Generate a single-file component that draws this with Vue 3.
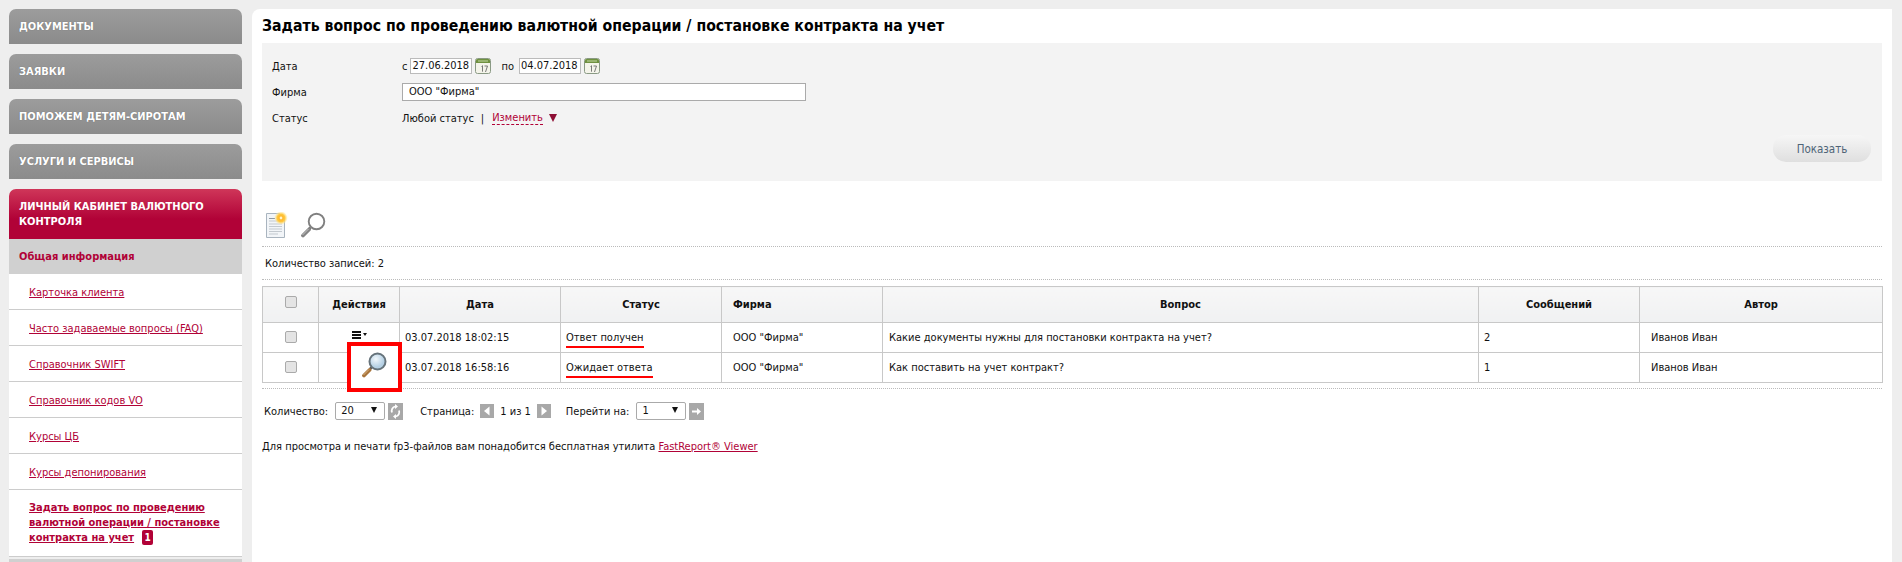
<script setup>
const topMenu = ['ДОКУМЕНТЫ', 'ЗАЯВКИ', 'ПОМОЖЕМ ДЕТЯМ-СИРОТАМ', 'УСЛУГИ И СЕРВИСЫ']
const links = ['Карточка клиента', 'Часто задаваемые вопросы (FAQ)', 'Справочник SWIFT', 'Справочник кодов VO', 'Курсы ЦБ', 'Курсы депонирования']
const rows = [
  { date: '03.07.2018 18:02:15', status: 'Ответ получен', firm: 'ООО "Фирма"', q: 'Какие документы нужны для постановки контракта на учет?', n: 2, author: 'Иванов Иван', menu: true },
  { date: '03.07.2018 16:58:16', status: 'Ожидает ответа', firm: 'ООО "Фирма"', q: 'Как поставить на учет контракт?', n: 1, author: 'Иванов Иван', menu: false }
]
</script>

<template>
  <div class="page">
    <aside class="side">
      <div v-for="m in topMenu" :key="m" class="mi">{{ m }}</div>
      <div class="mi-active">ЛИЧНЫЙ КАБИНЕТ ВАЛЮТНОГО КОНТРОЛЯ</div>
      <div class="sub-head">Общая информация</div>
      <ul class="links">
        <li v-for="l in links" :key="l"><a>{{ l }}</a></li>
        <li class="cur"><a>Задать вопрос по проведению валютной операции / постановке контракта на учет</a><span class="num">1</span></li>
      </ul>
      <div class="side-end"></div>
    </aside>

    <main class="main">
      <h1>Задать вопрос по проведению валютной операции / постановке контракта на учет</h1>

      <section class="filter">
        <div class="f-row">
          <label>Дата</label>
          <span class="pre">с</span><span class="inp date">27.06.2018</span>
          <svg class="cal" viewBox="0 0 16 16"><rect x=".5" y=".5" width="15" height="15" rx="2" fill="#f4f4ea" stroke="#8a9a84"/><path d="M1 5V2.500A1.500 1.500 0 0 1 2.500 1h11A1.500 1.500 0 0 1 15 2.500V5z" fill="#6f9140"/><path d="M3 3h10" stroke="#c4d8a0"/><path d="M6.500 8.500l1-.8v6M9.500 8h3l-2 6" fill="none" stroke="#6b6b6b" stroke-width=".9"/></svg>
          <span class="pre po">по</span><span class="inp date">04.07.2018</span>
          <svg class="cal" viewBox="0 0 16 16"><rect x=".5" y=".5" width="15" height="15" rx="2" fill="#f4f4ea" stroke="#8a9a84"/><path d="M1 5V2.500A1.500 1.500 0 0 1 2.500 1h11A1.500 1.500 0 0 1 15 2.500V5z" fill="#6f9140"/><path d="M3 3h10" stroke="#c4d8a0"/><path d="M6.500 8.500l1-.8v6M9.500 8h3l-2 6" fill="none" stroke="#6b6b6b" stroke-width=".9"/></svg>
        </div>
        <div class="f-row">
          <label>Фирма</label>
          <span class="inp firm">ООО "Фирма"</span>
        </div>
        <div class="f-row">
          <label>Статус</label>
          <span>Любой статус</span><span class="sep">|</span><a class="change">Изменить</a><span class="tri"></span>
        </div>
        <div class="f-actions"><button class="show">Показать</button></div>
      </section>

      <div class="tools">
        <svg class="doc" viewBox="0 0 22 26">
          <defs><radialGradient id="glow"><stop offset="0" stop-color="#ffa818"/><stop offset=".6" stop-color="#ffc840"/><stop offset="1" stop-color="#fff0b0" stop-opacity=".3"/></radialGradient></defs>
          <path d="M.5 1.500h13l5 5v19H.5z" fill="#f2f5f8" stroke="#a9b4bf"/>
          <path d="M3 9h12M3 12h13M3 14.500h13M3 17h13M3 19.500h13M3 22h9" stroke="#c3c9cf"/>
          <path d="M3 6.500h6" stroke="#8f99a3"/>
          <circle cx="15" cy="6" r="6.500" fill="url(#glow)"/>
          <circle cx="15" cy="6" r="1.400" fill="#fff4c8"/>
        </svg>
        <svg class="loupe" viewBox="0 0 26 26">
          <circle cx="16.500" cy="9.500" r="7.800" fill="#fff" stroke="#808080" stroke-width="1.900"/>
          <path d="M10.500 15.500l-1.500 1.500" stroke="#777" stroke-width="2.500"/>
          <path d="M9 17.500l-6 6" stroke="#858585" stroke-width="3.800" stroke-linecap="round"/>
          <path d="M8.500 17l-6 6" stroke="#c5c5c5" stroke-width="1"/>
        </svg>
      </div>

      <div class="count">Количество записей: 2</div>

      <div class="table-wrap">
        <table>
          <colgroup>
            <col class="c1"><col class="c2"><col class="c3"><col class="c4"><col class="c5"><col class="c6"><col class="c7"><col class="c8">
          </colgroup>
          <thead>
            <tr>
              <th><span class="chk head-chk"></span></th>
              <th>Действия</th><th>Дата</th><th>Статус</th><th class="left">Фирма</th><th>Вопрос</th><th>Сообщений</th><th>Автор</th>
            </tr>
          </thead>
          <tbody>
            <tr v-for="r in rows" :key="r.date">
              <td class="ctr"><span class="chk"></span></td>
              <td class="ctr">
                <span v-if="r.menu" class="act"><span class="burger"></span><span class="caret"></span></span>
              </td>
              <td>{{ r.date }}</td>
              <td><span class="st">{{ r.status }}</span></td>
              <td class="pad">{{ r.firm }}</td>
              <td class="qcell">{{ r.q }}</td>
              <td>{{ r.n }}</td>
              <td class="pad">{{ r.author }}</td>
            </tr>
          </tbody>
        </table>
        <div class="mark">
          <svg class="big-loupe" viewBox="0 0 26 26">
            <defs><radialGradient id="lens" cx=".4" cy=".35"><stop offset="0" stop-color="#f2f8fc"/><stop offset="1" stop-color="#b5d0e4"/></radialGradient></defs>
            <circle cx="16.500" cy="9.500" r="8" fill="url(#lens)" stroke="#66737b" stroke-width="2"/>
            <path d="M10.500 15.500l-1.500 1.500" stroke="#5d5d5d" stroke-width="2.500"/>
            <path d="M8.500 18l-5.500 5.500" stroke="#a8743c" stroke-width="3.800" stroke-linecap="round"/>
            <path d="M8 17.500l-5.500 5.500" stroke="#d9b27e" stroke-width="1"/>
          </svg>
        </div>
      </div>

      <div class="pager">
        <span>Количество:</span>
        <span class="sel s20">20<i></i></span>
        <span class="pbtn wide"><svg viewBox="0 0 15 17"><path d="M7 3.500A4.500 4.500 0 0 0 4 9.500M8 13.500a4.500 4.500 0 0 0 3-6" fill="none" stroke="#fff" stroke-width="1.800"/><path d="M7 1v5l3-2.500zM8 16v-5l-3 2.500z" fill="#fff"/></svg></span>
        <span class="page-lbl">Страница:</span>
        <span class="pbtn"><svg viewBox="0 0 14 14"><path d="M9.500 2.500v9L4 7z" fill="#fff"/></svg></span>
        <span class="pg">1 из 1</span>
        <span class="pbtn"><svg viewBox="0 0 14 14"><path d="M4.500 2.500v9L10 7z" fill="#fff"/></svg></span>
        <span class="go-lbl">Перейти на:</span>
        <span class="sel s1">1<i></i></span>
        <span class="pbtn wide"><svg viewBox="0 0 15 17"><path d="M3 7.500h5V5l4 3.500-4 3.500V9.500H3z" fill="#fff"/></svg></span>
      </div>

      <p class="note">Для просмотра и печати fp3-файлов вам понадобится бесплатная утилита <a>FastReport® Viewer</a></p>
    </main>
  </div>
</template>

<style>
html, body { margin: 0; background: #eee; overflow: hidden; }
</style>

<style scoped>
.page {
  display: flex; gap: 10px; padding: 9px 10px 0 9px; height: 553px; overflow: hidden;
  background: #eee; color: #111;
  font-family: "DejaVu Sans", Verdana, sans-serif; font-stretch: condensed; font-size: 11px;
}
.side { width: 233px; flex: none; display: flex; flex-direction: column; }
.side > * { flex: none; }
.mi {
  height: 35px; line-height: 35px; margin-bottom: 10px; padding-left: 10px;
  border-radius: 7px 7px 0 0; background: linear-gradient(#9c9c9c, #8b8b8b);
  color: #fff; font-weight: 700; font-size: 11px; text-shadow: 0 0 1px rgba(0,0,0,.3);
}
.mi-active {
  height: 50px; box-sizing: border-box; padding: 10px 20px 0 10px; line-height: 15px;
  border-radius: 7px 7px 0 0; background: linear-gradient(#cf3659, #b10237 60%);
  color: #fff; font-weight: 700;
}
.sub-head {
  height: 35px; line-height: 35px; padding-left: 10px; background: #d0d0d0;
  color: #b10237; font-weight: 700;
}
.links { list-style: none; margin: 0; padding: 0; background: #fff; }
.links li { height: 36px; box-sizing: border-box; border-bottom: 1px solid #ccc; padding: 11px 10px 0 20px; line-height: 15px; }
.links a { color: #b10237; text-decoration: underline; }
.links li.cur { height: 67px; padding: 10px 10px 0 20px; font-weight: 700; }
.num { display: inline-block; margin-left: 8px; width: 11px; height: 15px; line-height: 15px; border-radius: 2px; background: #b10237; color: #fff; font-weight: 700; text-align: center; font-size: 10px; }
.side-end { margin-top: 2px; background: #d0d0d0; height: 10px; }

.main { flex: 1; background: #fff; border-radius: 8px 0 0 0; padding: 0 10px; min-width: 0; }
h1 { margin: 0; height: 34px; line-height: 34px; font-size: 15.7px; font-weight: 700; color: #000; white-space: nowrap; }
.filter { background: #f3f3f3; height: 138px; box-sizing: border-box; padding: 10px 11px 0 10px; position: relative; }
.f-row { display: flex; align-items: center; height: 26px; }
.f-row label { width: 130px; flex: none; }
.pre { margin-right: 3px; }
.po { margin: 0 5px 0 10px; }
.inp { box-sizing: border-box; display: inline-block; background: #fff; border: 1px solid #aaa; color: #111; }
.date { width: 62px; height: 16px; line-height: 14px; padding-left: 1px; font-size: 11px; border-color: #bbb; }
.firm { width: 404px; height: 18px; line-height: 15px; padding-left: 6px; border-width: 1px; }
.cal { width: 16px; height: 16px; margin-left: 3px; }
.sep { margin: 0 8px 0 7px; }
.change { color: #b10237; border-bottom: 1px dashed #b10237; line-height: 13px; }
.tri { margin-left: 6px; width: 0; height: 0; border: 4px solid transparent; border-top: 8px solid #8e0f35; border-bottom: 0; }
.f-actions { position: absolute; right: 11px; top: 92px; }
.show {
  width: 98px; height: 27px; border: 0; border-radius: 13px; padding: 0;
  background: linear-gradient(#f6f6f6, #dfdfdf); color: #4f6477;
  font: inherit; font-size: 11.5px;
}
.tools { height: 66px; box-sizing: border-box; border-bottom: 1px dotted #bbb; display: flex; align-items: flex-start; padding: 31px 0 0 4px; }
.doc { width: 22px; height: 26px; }
.loupe { width: 26px; height: 26px; margin-left: 12px; }
.count { height: 33px; line-height: 33px; padding-left: 3px; border-bottom: 1px dotted #bbb; box-sizing: border-box; }
.table-wrap { position: relative; padding: 6px 0 5px; border-bottom: 1px dotted #bbb; }
table { border-collapse: collapse; table-layout: fixed; width: 1620px; border: 1px solid #c8c8c8; }
.c1 { width: 56px; } .c2 { width: 81px; } .c3 { width: 161px; } .c4 { width: 161px; }
.c5 { width: 161px; } .c6 { width: 596px; } .c7 { width: 161px; } .c8 { width: 243px; }
th, td { border: 1px solid #c8c8c8; padding: 0 5px; }
th { height: 35px; background: linear-gradient(#f7f7f7, #f0f1f2); font-weight: 700; text-align: center; color: #111; }
th.left { text-align: left; padding-left: 11px; }
td { height: 29px; color: #111; }
td.ctr { text-align: center; }
td.pad { padding-left: 11px; }
td.qcell { padding-left: 6px; }
.chk { display: inline-block; vertical-align: middle; box-sizing: border-box; width: 12px; height: 12px; border: 1px solid #aaa; border-radius: 2px; background: #e4e4e4; margin-top: -3px; }
.head-chk { margin-top: -6px; }
.act { display: inline-flex; align-items: center; gap: 2px; margin-top: -7px; vertical-align: middle; }
.burger { width: 9px; height: 8px; background: repeating-linear-gradient(#111 0 2px, #fff 2px 3px); }
.caret { width: 0; height: 0; border: 2.5px solid transparent; border-top: 3px solid #111; border-bottom: 0; }
.st { display: inline-block; border-bottom: 2px solid #f00; padding-bottom: 2px; margin-bottom: -4px; }
.mark {
  position: absolute; left: 85px; top: 62px; width: 55px; height: 50px; box-sizing: border-box;
  border: 4px solid #f00; background: #fff; display: flex; align-items: center; justify-content: center;
}
.big-loupe { width: 26px; height: 26px; margin-top: -4px; margin-left: -1px; }
.pager { display: flex; align-items: center; height: 34px; margin-top: 5px; padding-left: 2px; }
.sel { position: relative; box-sizing: border-box; display: inline-block; height: 18px; line-height: 16px; border: 1px solid #aaa; border-radius: 2px; padding-left: 5px; background: #fff; width: 50px; }
.sel i { position: absolute; right: 7px; top: 4px; border: 3.5px solid transparent; border-top: 6px solid #111; border-bottom: 0; }
.s20 { margin-left: 7px; }
.s1 { margin-left: 7px; }
.pbtn { width: 14px; height: 14px; background: #a8a8a8; display: inline-flex; flex: none; }
.pbtn svg { width: 100%; height: 100%; }
.pbtn.wide { width: 15px; height: 17px; margin-left: 3px; }
.page-lbl { margin: 0 6px 0 17px; }
.pg { margin: 0 6px; }
.go-lbl { margin-left: 15px; }
.note { margin: 11px 0 0; line-height: 15px; }
.note a { color: #b10237; text-decoration: underline; }
</style>
